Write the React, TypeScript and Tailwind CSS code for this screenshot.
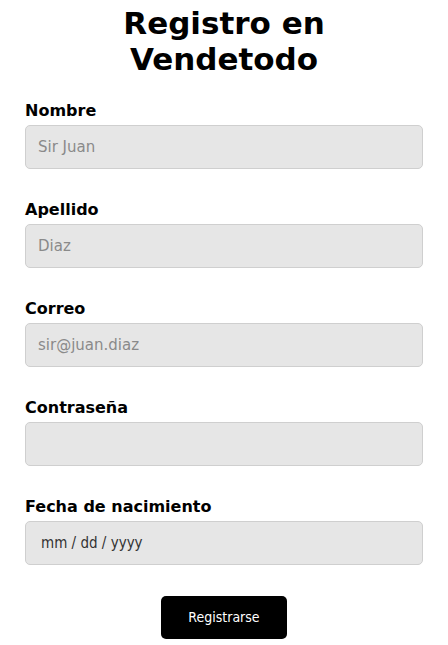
import React from 'react';

const fields = [
  { label: 'Nombre', type: 'text', placeholder: 'Sir Juan' },
  { label: 'Apellido', type: 'text', placeholder: 'Diaz' },
  { label: 'Correo', type: 'email', placeholder: 'sir@juan.diaz' },
  { label: 'Contraseña', type: 'password', placeholder: '' },
];

export default function App() {
  return (
    <div className="min-h-screen bg-white text-black font-['DejaVu_Sans',sans-serif]">
      <form className="flex flex-col px-[25px] pt-[5px] pb-[6px]" onSubmit={(e) => e.preventDefault()}>
        <h1 className="text-center text-[31px] leading-[36px] font-bold mx-auto w-[260px]">Registro en Vendetodo</h1>

        <div className="flex flex-col gap-[31px] mt-[24px]">
          {fields.map((f) => (
            <label key={f.label} className="flex flex-col">
              <span className="text-[16px] leading-[19px] font-bold mb-[5px]">{f.label}</span>
              <input
                type={f.type}
                placeholder={f.placeholder}
                className="h-[44px] w-full rounded-[5px] border border-[#cfcfcf] bg-[#e6e6e6] px-[12px] text-[15px] text-black placeholder:text-[#8a8a8a] outline-none"
              />
            </label>
          ))}
          <label className="flex flex-col">
            <span className="text-[16px] leading-[19px] font-bold mb-[5px]">Fecha de nacimiento</span>
            {/* date mask drawn like the reference's browser */}
            <input
              type="text"
              placeholder="mm / dd / yyyy"
              className="h-[44px] w-full rounded-[5px] border border-[#cfcfcf] bg-[#e6e6e6] px-[15px] text-[15px] font-stretch-condensed text-black placeholder:text-[#333] outline-none"
            />
          </label>
        </div>

        <button
          type="submit"
          className="mx-auto mt-[31px] h-[43px] w-[126px] rounded-[5px] bg-black text-white text-[14px] font-stretch-condensed"
        >
          Registrarse
        </button>
      </form>
    </div>
  );
}
